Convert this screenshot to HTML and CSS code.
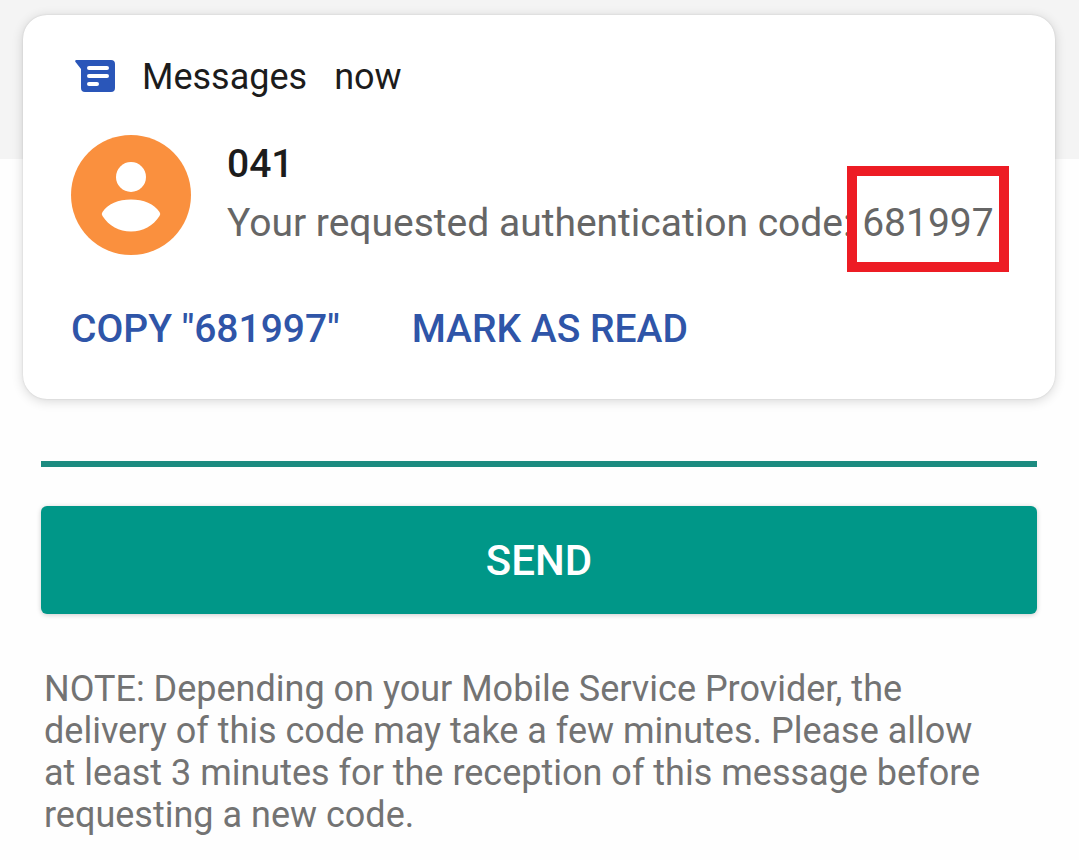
FILE: index.html
```html
<!DOCTYPE html>
<html lang="en">
<head>
<meta charset="utf-8">
<meta name="viewport" content="width=device-width, initial-scale=1">
<title>Verification code</title>
<link rel="stylesheet" href="styles.css">
</head>
<body>
<section class="notification">
  <header class="app">
    <svg class="app-icon" viewBox="0 0 40 34" aria-hidden="true">
      <path fill="#2a56b9" d="M1.500 0H36a4 4 0 0 1 4 4v24a4 4 0 0 1-4 4H10a4 4 0 0 1-4-4V9L.5 2Q-.5 0 1.500 0z"/>
      <path stroke="#fff" stroke-width="4" stroke-linecap="round" d="M14 8h18M14 16h18M14 24h8"/>
    </svg>
    <span>Messages</span>
    <span>now</span>
  </header>
  <div class="message">
    <svg class="avatar" viewBox="0 0 120 120" aria-hidden="true">
      <circle cx="60" cy="60" r="60" fill="#fa903e"/>
      <circle cx="60" cy="42" r="15" fill="#fff"/>
      <path fill="#fff" d="M31.500 77c5-8 16-12.500 28.500-12.500S83.500 69 88.500 77q1.500 2 0 4C82 91 72 96.500 60 96.500S38 91 31.500 81q-1.500-2 0-4z"/>
    </svg>
    <div>
      <h1 class="sender">041</h1>
      <p class="body">Your requested authentication code: <span class="code">681997</span></p>
    </div>
  </div>
  <div class="actions">
    <button class="action" type="button">COPY "681997"</button>
    <button class="action" type="button">MARK AS READ</button>
  </div>
</section>
<main class="form">
  <input class="field" type="text" aria-label="Authentication code">
  <button class="send" type="button">SEND</button>
  <p class="note">NOTE: Depending on your Mobile Service Provider, the delivery of this code may take a few minutes. Please allow at least 3 minutes for the reception of this message before requesting a new code.</p>
</main>
</body>
</html>
```
FILE: styles.css
```css
* { box-sizing: border-box; }
body {
  margin: 0;
  padding-top: 15px;
  background: linear-gradient(#f4f4f4 159px, #fefefe 159px) no-repeat;
  font-family: Roboto, "Liberation Sans", sans-serif;
  color: #1c1c1c;
}
.notification {
  margin: 0 24px 0 23px;
  padding: 38px 48px 46px;
  border-radius: 24px;
  background: #fff;
  box-shadow: 0 2px 12px rgba(0, 0, 0, 0.16), 0 0 2px rgba(0, 0, 0, 0.12);
}
.app {
  display: flex;
  align-items: center;
  gap: 27px;
  padding-left: 4px;
  font-size: 36px;
  line-height: 48px;
}
.app-icon { width: 40px; height: 34px; }
.message {
  display: flex;
  gap: 36px;
  margin-top: 34px;
}
.avatar { width: 120px; height: 120px; flex: none; }
.sender {
  margin: 0;
  font-size: 39px;
  font-weight: 500;
  line-height: 58px;
}
.body {
  margin: 0;
  font-size: 39px;
  line-height: 60px;
  color: #666;
  white-space: nowrap;
}
.code { position: relative; }
.code::after {
  content: "";
  position: absolute;
  inset: -34px -15px -26px;
  border: 10px solid #ed1c24;
}
.actions {
  display: flex;
  gap: 72px;
  margin-top: 50px;
}
.action {
  padding: 0;
  border: 0;
  background: none;
  font: 500 39px/48px Roboto, "Liberation Sans", sans-serif;
  color: #2f55a8;
}
.form {
  padding: 0 42px 24px 41px;
}
.field {
  display: block;
  width: 100%;
  height: 68px;
  padding: 0;
  border: 0;
  border-bottom: 6px solid #1c8b80;
  background: transparent;
  font: 39px Roboto, "Liberation Sans", sans-serif;
  outline: none;
}
.send {
  display: block;
  width: 100%;
  height: 108px;
  margin-top: 39px;
  border: 0;
  border-radius: 6px;
  background: #009788;
  box-shadow: 0 1px 5px rgba(0, 0, 0, 0.2);
  font: 500 42px Roboto, "Liberation Sans", sans-serif;
  color: #fff;
}
.note {
  margin: 54px 0 0;
  padding: 0 40px 0 3px;
  font-size: 36px;
  line-height: 42px;
  color: #737373;
}
```
